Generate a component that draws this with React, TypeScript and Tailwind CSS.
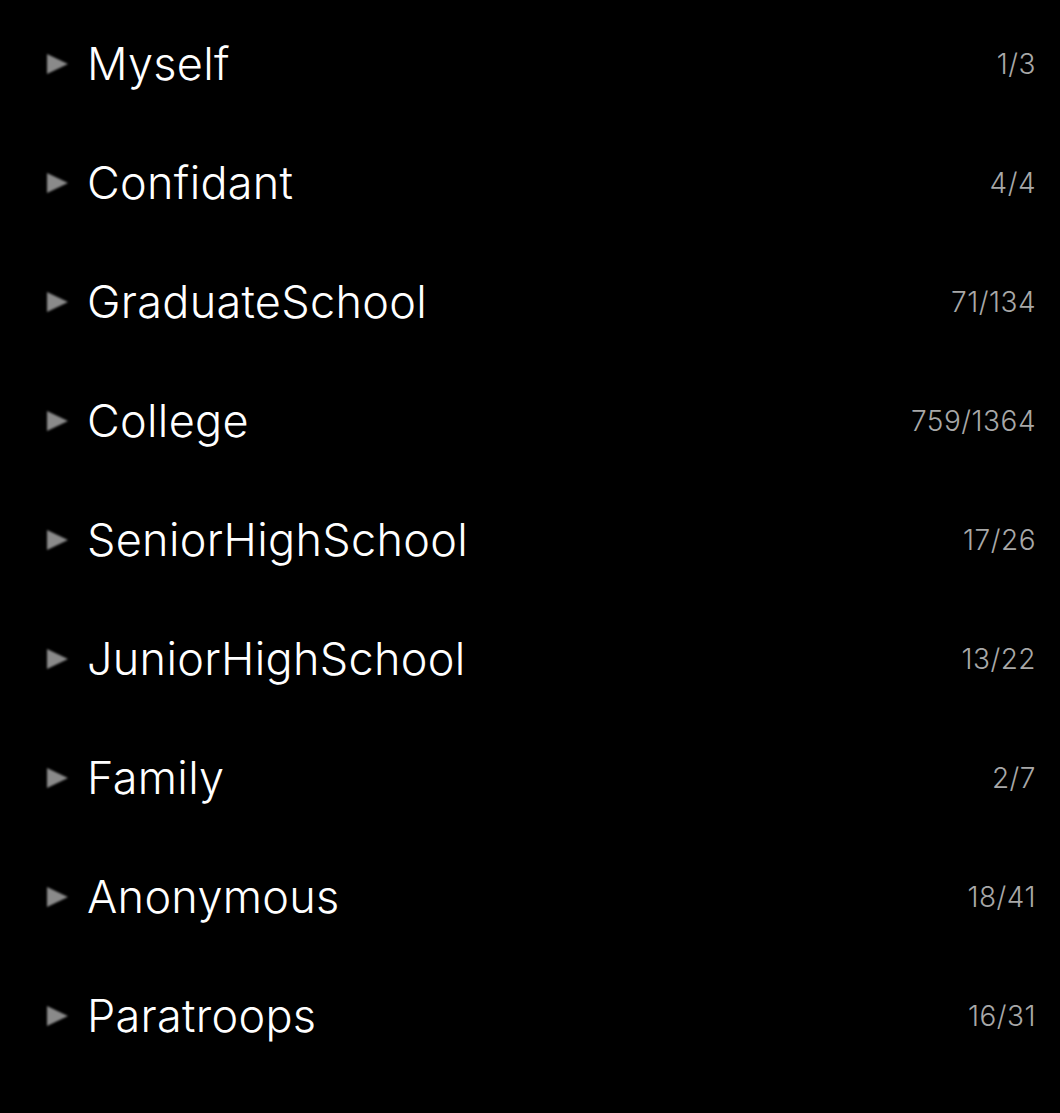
const groups = [
  { name: "Myself", count: "1/3" },
  { name: "Confidant", count: "4/4" },
  { name: "GraduateSchool", count: "71/134" },
  { name: "College", count: "759/1364" },
  { name: "SeniorHighSchool", count: "17/26" },
  { name: "JuniorHighSchool", count: "13/22" },
  { name: "Family", count: "2/7" },
  { name: "Anonymous", count: "18/41" },
  { name: "Paratroops", count: "16/31" },
];

export default function App() {
  return (
    <div
      className="min-h-screen bg-black pt-[4px]"
      style={{ fontFamily: 'Inter, "Noto Sans", sans-serif' }}
    >
      {groups.map((g) => (
        <div key={g.name} className="flex h-[119px] items-center pl-[44px] pr-[24px]">
          <svg width="26" height="26" viewBox="0 0 26 26" className="shrink-0 blur-[0.9px]">
            <polygon points="3,3 24,13 3,23" fill="#8a8a8a" />
          </svg>
          <span className="ml-[17px] text-[45px] font-light leading-none tracking-[0.3px] text-white">
            {g.name}
          </span>
          <span className="ml-auto text-[28px] font-light leading-none tracking-[0.5px] text-[#a8a8a8]">
            {g.count}
          </span>
        </div>
      ))}
    </div>
  );
}
